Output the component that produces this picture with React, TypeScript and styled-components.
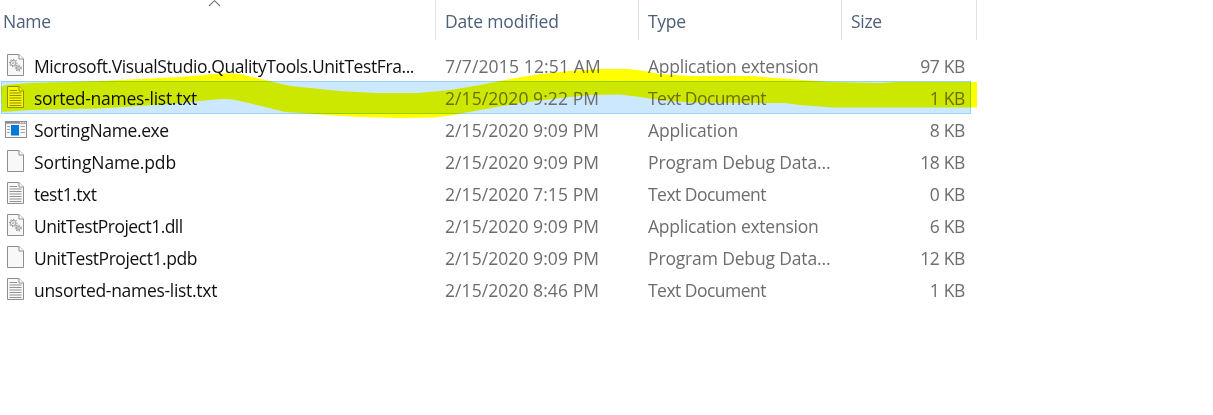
import React from "react";
import styled, { createGlobalStyle, css } from "styled-components";

const GlobalStyle = createGlobalStyle`
  body {
    margin: 0;
    background: #fff;
    font-family: "Open Sans", "Noto Sans", sans-serif;
    font-size: 17.5px;
  }
`;

const columns = css`
  display: grid;
  grid-template-columns: 435px 203px 203px 136px;
`;

const Explorer = styled.main`
  position: relative;
  width: 1213px;
  height: 415px;
  overflow: hidden;
  background: #fff;
  isolation: isolate;
`;

const Header = styled.div`
  display: grid;
  grid-template-columns: 436px 203px 203px 135px;
  height: 40px;
`;

const HeaderCell = styled.div<{ $inset: number; $tracking: number }>`
  box-sizing: border-box;
  position: relative;
  height: 40px;
  padding: 1px 0 0 ${(p) => p.$inset}px;
  line-height: 40px;
  color: #4c607a;
  letter-spacing: ${(p) => p.$tracking}px;
  white-space: nowrap;
  border-right: 1px solid #e2e2e2;
`;

const SortArrow = styled.svg`
  position: absolute;
  top: 0;
  left: 208px;
`;

const List = styled.div`
  padding-top: 10px;
`;

const IconSlot = styled.span`
  display: flex;
  width: 29px;
  height: 24px;
  margin-top: 4px;
`;

const NameCell = styled.div`
  display: flex;
  align-items: flex-start;
  padding-left: 5px;
  color: #111;
  white-space: nowrap;
`;

const Row = styled.div<{ $selected?: boolean }>`
  ${columns}
  height: 32px;
  line-height: 33px;
  ${(p) =>
    p.$selected &&
    css`
      width: 970px;
      margin: -1px 0 0 1px;
      height: 33px;
      line-height: 35px;
      background: #cce8ff;
      box-shadow: inset 0 0 0 1px #99d1ff;
      grid-template-columns: 434px 203px 203px 130px;
      ${NameCell} {
        padding-left: 4px;
      }
      ${IconSlot} {
        margin-top: 5px;
      }
    `}
`;

const Label = styled.span<{ $tracking: number }>`
  letter-spacing: ${(p) => p.$tracking}px;
`;

const Cell = styled.div`
  padding-left: 10px;
  color: #6d6d6d;
  white-space: nowrap;
`;

const SizeCell = styled.div`
  width: 124px;
  text-align: right;
  color: #6d6d6d;
  white-space: nowrap;
`;

const Marker = styled.svg`
  position: absolute;
  top: 60px;
  left: 0;
  mix-blend-mode: multiply;
  pointer-events: none;
`;

type Kind = "dll" | "txt" | "exe" | "blank";

const Gear = ({ x, y, r }: { x: number; y: number; r: number }) => (
  <g fill="none" stroke="#979da3">
    <circle cx={x} cy={y} r={r} strokeWidth="1" />
    <circle cx={x} cy={y} r={r + 1} strokeWidth="1.1" strokeDasharray="1.3 1.5" />
    <circle cx={x} cy={y} r="0.9" strokeWidth="0.7" />
  </g>
);

const FileIcon = ({ kind }: { kind: Kind }) =>
  kind === "exe" ? (
    <svg width="23" height="24" viewBox="0 0 23 24">
      <rect x="0.5" y="3.5" width="21" height="16" fill="#f7f7f7" stroke="#8a8f94" />
      <path d="M0 4.5H22" stroke="#8a8f94" strokeWidth="2.4" />
      <path d="M15 4.5h1.3m1.2 0h1.3m1 0h1" stroke="#fff" />
      <rect x="6" y="7" width="8" height="10.5" fill="#0078d7" />
      <path d="M2 8.5h3M2 11.5h3M2 14.5h3M15.5 8.5h4.5M15.5 11.5h4.5M15.5 14.5h4.5" stroke="#a6a6a6" />
    </svg>
  ) : (
    <svg width="23" height="24" viewBox="0 1 23 24">
      <path d="M2.5 1.5H14L18.5 6V22.5H2.5Z" fill="#f8f8f8" stroke="#8e8e8e" />
      <path d="M14 1.5V6H18.5" fill="#fff" stroke="#8e8e8e" />
      {kind === "txt" && (
        <path
          d="M4.500 5.500H12M4.500 8H16.500M4.500 10.500H16.500M4.500 13H16.500M4.500 15.500H16.500M4.500 18H16.500M4.500 20.500H16.500"
          stroke="#929292"
        />
      )}
      {kind === "dll" && (
        <>
          <Gear x={8.2} y={10} r={2.7} />
          <Gear x={13.3} y={15} r={2} />
        </>
      )}
    </svg>
  );

interface FileEntry {
  name: string;
  kind: Kind;
  date: string;
  type: string;
  size: string;
  tracking: [number, number, number];
  selected?: boolean;
}

const files: FileEntry[] = [
  { name: "Microsoft.VisualStudio.QualityTools.UnitTestFra...", kind: "dll", date: "7/7/2015 12:51 AM", type: "Application extension", size: "97 KB", tracking: [-0.41, 0.15, -0.25] },
  { name: "sorted-names-list.txt", kind: "txt", date: "2/15/2020 9:22 PM", type: "Text Document", size: "1 KB", tracking: [-0.26, 0.07, -0.53], selected: true },
  { name: "SortingName.exe", kind: "exe", date: "2/15/2020 9:09 PM", type: "Application", size: "8 KB", tracking: [-0.38, 0.07, -0.12] },
  { name: "SortingName.pdb", kind: "blank", date: "2/15/2020 9:09 PM", type: "Program Debug Data...", size: "18 KB", tracking: [-0.12, 0.07, -0.15] },
  { name: "test1.txt", kind: "txt", date: "2/15/2020 7:15 PM", type: "Text Document", size: "0 KB", tracking: [-0.5, 0.07, -0.53] },
  { name: "UnitTestProject1.dll", kind: "dll", date: "2/15/2020 9:09 PM", type: "Application extension", size: "6 KB", tracking: [-0.54, 0.07, -0.25] },
  { name: "UnitTestProject1.pdb", kind: "blank", date: "2/15/2020 9:09 PM", type: "Program Debug Data...", size: "12 KB", tracking: [-0.45, 0.07, -0.15] },
  { name: "unsorted-names-list.txt", kind: "txt", date: "2/15/2020 8:46 PM", type: "Text Document", size: "1 KB", tracking: [-0.3, 0.07, -0.53] },
];

export default function App() {
  return (
    <>
      <GlobalStyle />
      <Explorer>
        <Header>
          <HeaderCell $inset={3} $tracking={-0.3}>
            Name
            <SortArrow width="13" height="8" viewBox="0 0 13 8">
              <path d="M1 6L6.5 0.7L12 6" fill="none" stroke="#777" strokeWidth="1.1" />
            </SortArrow>
          </HeaderCell>
          <HeaderCell $inset={9} $tracking={-0.15}>Date modified</HeaderCell>
          <HeaderCell $inset={9} $tracking={-0.3}>Type</HeaderCell>
          <HeaderCell $inset={9} $tracking={-0.3}>Size</HeaderCell>
        </Header>
        <List>
          {files.map((f) => (
            <Row key={f.name} $selected={f.selected}>
              <NameCell>
                <IconSlot>
                  <FileIcon kind={f.kind} />
                </IconSlot>
                <Label $tracking={f.tracking[0]}>{f.name}</Label>
              </NameCell>
              <Cell>
                <Label $tracking={f.tracking[1]}>{f.date}</Label>
              </Cell>
              <Cell>
                <Label $tracking={f.tracking[2]}>{f.type}</Label>
              </Cell>
              <SizeCell>
                <Label $tracking={-0.35}>{f.size}</Label>
              </SizeCell>
            </Row>
          ))}
        </List>
        <Marker width="980" height="60" viewBox="0 60 980 60">
          <path
            fill="#ff0"
            d="M1 87L5 85L30 83L100 81L140 79L180 77L203 75Q225 72 240 74L257 78L273 82L290 86L310 88L340 91L375 93H418L450 90L480 85L510 79L540 74L570 71L600 69H628L645 71L660 74L690 76H750L790 79L830 82L880 83L895 82H977V107.5H833L800 105L785 103L690 102.500L660 100L640 97L620 94.500L590 95L560 98L520 103L480 110L450 115.500L435 117.500L400 118L360 117L320 114.500L285 112L265 107L240 101Q229 97.500 210 100L170 104L100 108.500L30 110L2 112Z"
          />
        </Marker>
      </Explorer>
    </>
  );
}
